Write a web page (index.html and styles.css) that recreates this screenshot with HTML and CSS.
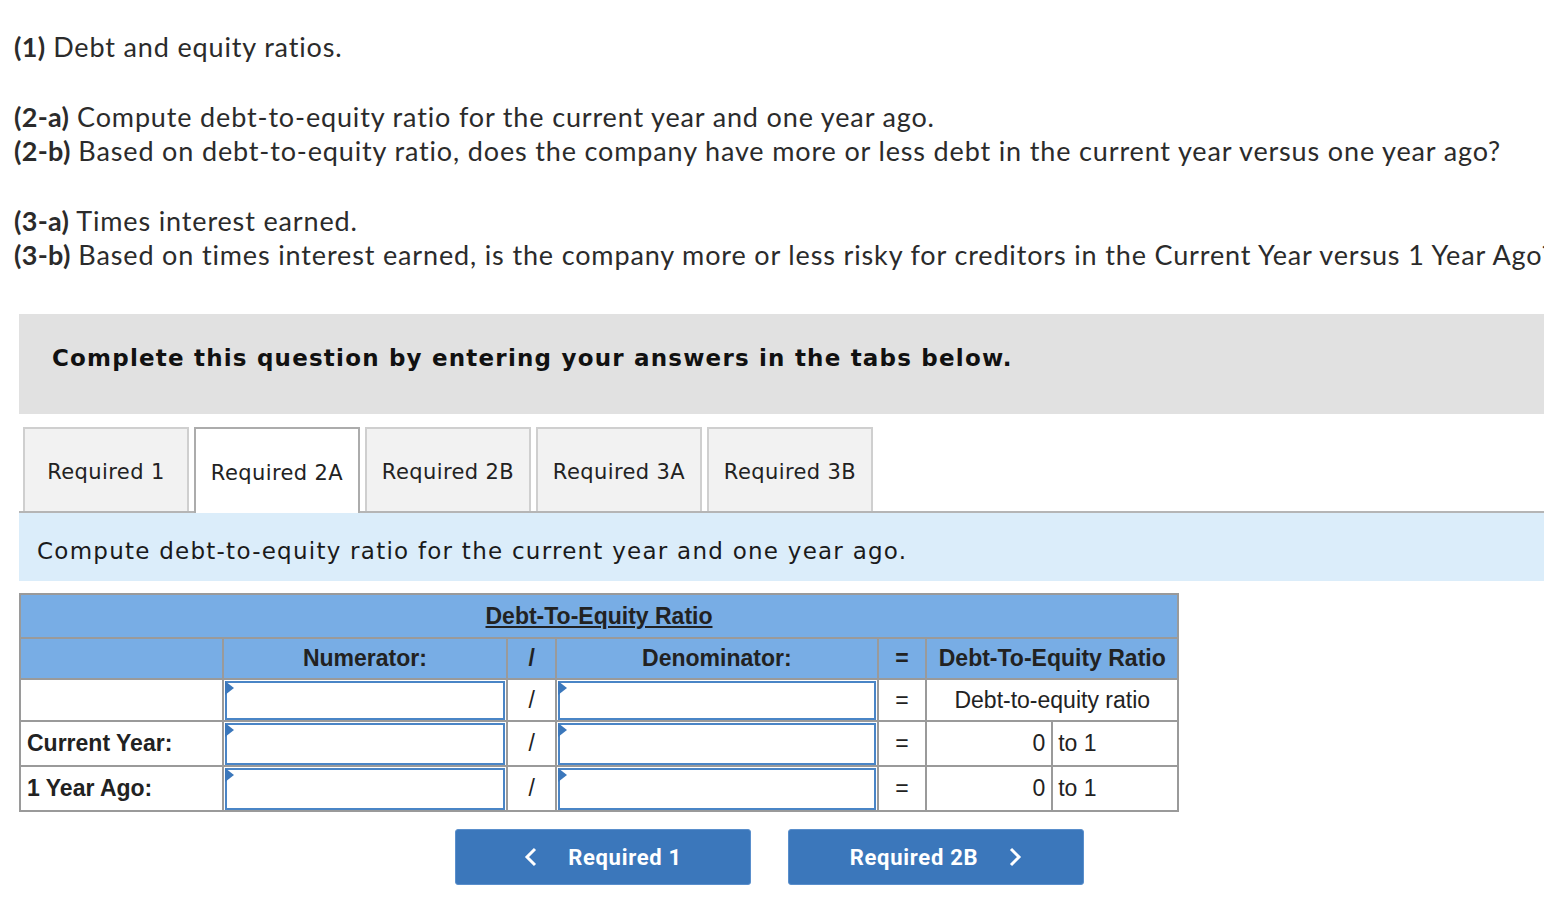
FILE: index.html
```html
<!DOCTYPE html>
<html>
<head>
<meta charset="utf-8">
<link rel="stylesheet" href="styles.css">
</head>
<body>
<div class="page">
  <div class="intro">
    <p class="para"><b>(1)</b> Debt and equity ratios.</p>
    <p class="para"><b>(2-a)</b> Compute debt-to-equity ratio for the current year and one year ago.<br><b>(2-b)</b> Based on debt-to-equity ratio, does the company have more or less debt in the current year versus one year ago?</p>
    <p class="para last"><b>(3-a)</b> Times interest earned.<br><b>(3-b)</b> Based on times interest earned, is the company more or less risky for creditors in the Current Year versus 1 Year Ago?</p>
  </div>

  <div class="panel">
    <div class="banner">Complete this question by entering your answers in the tabs below.</div>
    <div class="tabs">
      <div class="tab">Required 1</div>
      <div class="tab active">Required 2A</div>
      <div class="tab">Required 2B</div>
      <div class="tab">Required 3A</div>
      <div class="tab">Required 3B</div>
    </div>
    <div class="instruction">Compute debt-to-equity ratio for the current year and one year ago.</div>

    <table class="grid">
      <colgroup>
        <col class="c-label"><col class="c-num"><col class="c-op"><col class="c-den"><col class="c-op"><col class="c-res1"><col class="c-res2">
      </colgroup>
      <tr class="r-title"><th colspan="7"><u>Debt-To-Equity Ratio</u></th></tr>
      <tr class="r-head">
        <th></th><th>Numerator:</th><th>/</th><th>Denominator:</th><th>=</th><th colspan="2">Debt-To-Equity Ratio</th>
      </tr>
      <tr class="r-1">
        <td></td><td class="inp"><div class="field"></div></td><td class="op">/</td><td class="inp"><div class="field"></div></td><td class="op">=</td><td colspan="2" class="center">Debt-to-equity ratio</td>
      </tr>
      <tr class="r-2">
        <td class="label">Current Year:</td><td class="inp"><div class="field"></div></td><td class="op">/</td><td class="inp"><div class="field"></div></td><td class="op">=</td><td class="val">0</td><td class="to">to 1</td>
      </tr>
      <tr class="r-2">
        <td class="label">1 Year Ago:</td><td class="inp"><div class="field"></div></td><td class="op">/</td><td class="inp"><div class="field"></div></td><td class="op">=</td><td class="val">0</td><td class="to">to 1</td>
      </tr>
    </table>

    <div class="nav">
      <button class="btn"><svg class="chev" width="14" height="22" viewBox="0 0 14 22"><path d="M11 3 L3 11 L11 19" fill="none" stroke="#fff" stroke-width="3"/></svg><span>Required 1</span></button>
      <button class="btn"><span>Required 2B</span><svg class="chev" width="14" height="22" viewBox="0 0 14 22"><path d="M3 3 L11 11 L3 19" fill="none" stroke="#fff" stroke-width="3"/></svg></button>
    </div>
  </div>
</div>
</body>
</html>
```

FILE: styles.css
```css
html, body {
  margin: 0;
  padding: 0;
  background: #fff;
  overflow: hidden;
}
.page {
  width: 1700px;
  padding: 30px 0 0 14px;
}
.intro {
  font-family: "Lato", "Liberation Sans", sans-serif;
  font-size: 27px;
  letter-spacing: 0.85px;
  line-height: 34px;
  color: #2b2b2b;
  padding-right: 100px;
}
.intro b { font-weight: 700; letter-spacing: 0.3px; }
.para {
  margin: 0 0 36px 0;
  white-space: nowrap;
}
.para.last { margin-bottom: 0; }
.panel {
  margin-left: 5px;
  margin-top: 42px;
}
.banner {
  background: #e1e1e1;
  height: 100px;
  box-sizing: border-box;
  display: flex;
  align-items: center;
  padding-left: 33px;
  padding-bottom: 13px;
  font-family: "DejaVu Sans", Verdana, sans-serif;
  font-weight: bold;
  font-size: 23px;
  letter-spacing: 1.2px;
  color: #111;
}
.tabs {
  display: flex;
  gap: 5px;
  margin-top: 13px;
  padding-left: 4px;
  border-bottom: 2px solid #b5b5b5;
  height: 84px;
}
.tab {
  width: 166px;
  height: 84px;
  box-sizing: border-box;
  background: #f2f2f2;
  border: 2px solid #cfcfcf;
  border-bottom: none;
  display: flex;
  align-items: center;
  justify-content: center;
  padding-top: 4px;
  font-family: "DejaVu Sans", Verdana, sans-serif;
  font-size: 21px;
  letter-spacing: 0.4px;
  color: #222;
}
.tab.active {
  background: #fff;
  border-color: #acacac;
  height: 86px;
  margin-bottom: -2px;
  position: relative;
}
.instruction {
  background: #dbedfa;
  height: 68px;
  box-sizing: border-box;
  display: flex;
  align-items: center;
  padding-left: 18px;
  padding-top: 7px;
  font-family: "DejaVu Sans", Verdana, sans-serif;
  font-size: 23px;
  letter-spacing: 1.25px;
  color: #1a1a1a;
}
.grid {
  margin-top: 12px;
  border-collapse: collapse;
  width: 1160px;
  font-family: "Liberation Sans", Arial, sans-serif;
  font-size: 23px;
  color: #222;
  border: 2px solid #8e8e8e;
}
.c-label { width: 203px; }
.c-num { width: 285px; }
.c-op { width: 49px; }
.c-den { width: 322px; }
.c-res1 { width: 126px; }
.c-res2 { width: 126px; }
.grid th, .grid td {
  border: 2px solid #9a9a9a;
  padding: 0;
}
.grid th {
  background: #78ade5;
  font-weight: bold;
  color: #222;
}
.r-title th { height: 42px; }
.r-head th { height: 39px; }
.r-1 td { height: 40px; }
.r-2 td { height: 43px; }
.label {
  font-weight: bold;
  padding-left: 6px !important;
  text-align: left;
}
.op { text-align: center; }
.center { text-align: center; }
.val { text-align: right; padding-right: 6px !important; }
.to { text-align: left; padding-left: 5px !important; }
.inp {
  position: relative;
}
.field {
  position: absolute;
  left: 1px;
  right: 1px;
  top: 1px;
  bottom: 0;
  border: 2px solid #4a85c6;
  background: #fff;
}
.field::before {
  content: "";
  position: absolute;
  left: -2px;
  top: -2px;
  border-top: 7px solid transparent;
  border-bottom: 7px solid transparent;
  border-left: 9px solid #3b77bb;
}
.nav {
  display: flex;
  gap: 37px;
  margin-left: 436px;
  margin-top: 17px;
}
.btn {
  width: 296px;
  height: 56px;
  background: #3b77bb;
  border: 1px solid #5a8fcc;
  border-radius: 3px;
  color: #fff;
  font-family: "Roboto", "Liberation Sans", sans-serif;
  font-weight: bold;
  font-size: 22px;
  letter-spacing: 0.7px;
  display: flex;
  align-items: center;
  justify-content: center;
  gap: 30px;
  padding: 0;
}
.chev { display: block; }
```
